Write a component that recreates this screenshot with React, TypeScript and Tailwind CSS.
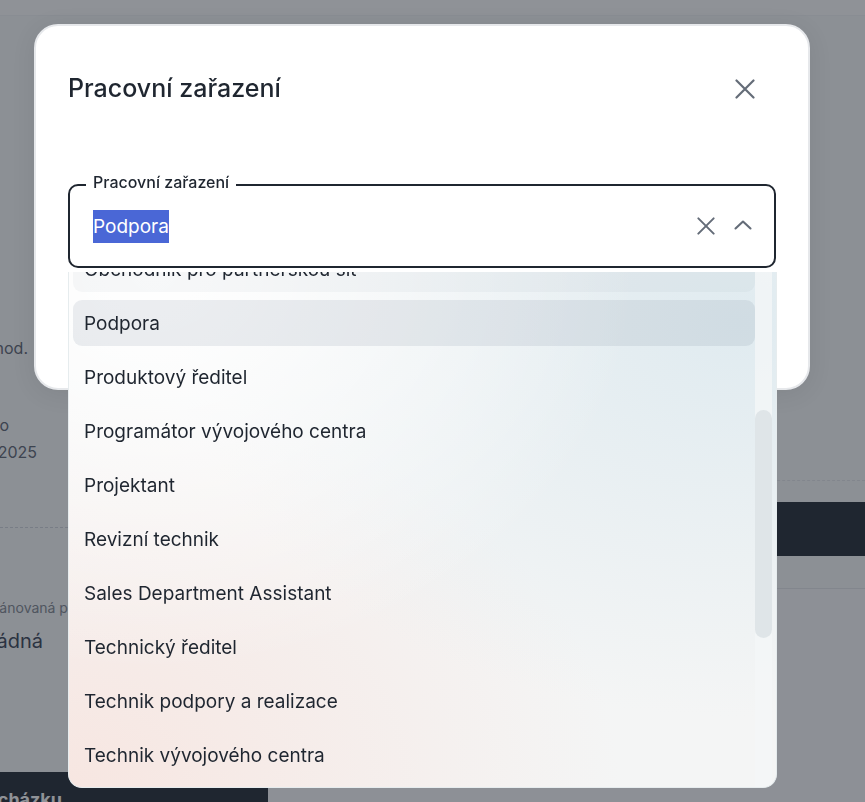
import { useState } from 'react';

const jobTitles = [
  'Obchodník pro partnerskou síť',
  'Podpora',
  'Produktový ředitel',
  'Programátor vývojového centra',
  'Projektant',
  'Revizní technik',
  'Sales Department Assistant',
  'Technický ředitel',
  'Technik podpory a realizace',
  'Technik vývojového centra',
  'Účetní',
  'Vedoucí obchodu',
];

const CloseIcon = ({ size = 20 }: { size?: number }) => (
  <svg width={size} height={size} viewBox="0 0 20 20" fill="none">
    <path
      d="M1.5 1.5L18.5 18.5M18.5 1.5L1.5 18.5"
      stroke="currentColor"
      strokeWidth="2.2"
      strokeLinecap="round"
    />
  </svg>
);

const ChevronUp = () => (
  <svg width="18" height="10" viewBox="0 0 18 10" fill="none">
    <path
      d="M1.5 8.5L9 1.5L16.5 8.5"
      stroke="currentColor"
      strokeWidth="2.1"
      strokeLinecap="round"
      strokeLinejoin="round"
    />
  </svg>
);

// page that sits behind the dialog, mostly covered
const BackgroundPage = () => (
  <div className="min-h-screen bg-[#f9fafb] flex flex-col">
    <div className="h-[16px] bg-white border-b border-gray-100" />
    <div className="flex flex-1">
      <aside className="w-[268px] flex flex-col text-[#5b6270]">
        <div className="mt-[320px] w-[28px] flex justify-end whitespace-nowrap text-[16px] leading-[24px]">
          Pracovní doba dle dohod.
        </div>
        <div className="mt-[53px] w-[9px] flex justify-end whitespace-nowrap text-[16px] leading-[24px]">
          Platné do
        </div>
        <div className="mt-[3px] w-[37px] flex justify-end whitespace-nowrap text-[16px] leading-[24px]">
          31. 12. 2025
        </div>
        <div className="mt-[63px] border-t border-dashed border-gray-300" />
        <div className="mt-[70px] -ml-[31px] whitespace-nowrap text-[14px] leading-[20px] text-[#80868f]">
          Naplánovaná přestávka
        </div>
        <div className="mt-[9px] w-[43px] flex justify-end whitespace-nowrap text-[20px] leading-[28px] text-gray-700">
          Žádná
        </div>
        <div className="mt-[117px] h-[54px] bg-[#1f2630] flex items-center">
          <div className="w-[62px] flex justify-end whitespace-nowrap text-[18px] font-bold text-white">
            Zapsat docházku
          </div>
        </div>
      </aside>
      <main className="flex-1 flex flex-col">
        <div className="mt-[464px] border-t border-dashed border-gray-200" />
        <div className="mt-[21px] ml-[40px] h-[54px] bg-[#1f2630]" />
        <div className="mt-[32px] flex-1 border-t border-gray-200 bg-[#fbfbfc]" />
      </main>
    </div>
  </div>
);

export default function App() {
  const [value] = useState('Podpora');

  return (
    <div className="relative font-['Inter',sans-serif] text-[#1f2630]">
      <BackgroundPage />

      <div className="fixed inset-0 bg-[#1f2630]/50 pt-[24px] pl-[34px]">
        <div className="relative w-[776px] h-[366px] rounded-[24px] bg-white border-2 border-[#e6e8eb] shadow-[0_4px_24px_rgba(0,0,0,0.08)] px-[32px]">
          <div className="mt-[43px] h-[40px] flex items-center justify-between">
            <h2 className="text-[25px] font-medium">Pracovní zařazení</h2>
            <button className="mr-[21px] text-[#646c78]">
              <CloseIcon />
            </button>
          </div>

          <div className="relative mt-[66px]">
            <fieldset className="h-[93px] rounded-[10px] border-2 border-[#1f2630] bg-white pl-[23px] pr-[22px]">
              <legend className="-ml-[7px] px-[7px] text-[16px] leading-[20px] font-medium">
                <span className="relative -top-[3px]">Pracovní zařazení</span>
              </legend>
              <div className="h-[62px] flex items-center">
                <div className="flex-1">
                  <span className="bg-[#4a67d6] text-white text-[19px] leading-[33px] inline-block">
                    {value}
                  </span>
                </div>
                <span className="text-[#646c78]">
                  <CloseIcon size={18} />
                </span>
                <span className="ml-[19px] text-[#646c78] mb-[2px]">
                  <ChevronUp />
                </span>
              </div>
            </fieldset>

            <div className="absolute left-0 top-[calc(100%+4px)] w-[709px] h-[516px] overflow-hidden rounded-b-[14px] border-x border-b border-[#e6ecee] bg-[#f4f5f5] bg-[radial-gradient(ellipse_at_12%_0%,#ffffff_0%,transparent_55%),radial-gradient(ellipse_at_95%_10%,#e0ebf0_0%,transparent_60%),radial-gradient(ellipse_at_0%_100%,#f7e6e1_0%,transparent_55%)] flex">
              <ul className="ml-[4px] w-[682px] -mt-[26px] flex flex-col gap-[8px]">
                {jobTitles.map((title) => (
                  <li
                    key={title}
                    className={`h-[46px] shrink-0 rounded-[9px] pl-[11px] pt-[3px] flex items-center text-[19px] ${
                      title === value
                        ? 'bg-[#64748b]/[0.12]'
                        : title === 'Obchodník pro partnerskou síť'
                          ? 'bg-[#64748b]/[0.05]'
                          : ''
                    }`}
                  >
                    {title}
                  </li>
                ))}
              </ul>
              <div className="w-[17px] bg-[#f4f6f7]/80 flex flex-col">
                <div className="mt-[138px] h-[228px] rounded-full bg-[#dfe5e8]" />
              </div>
            </div>
          </div>
        </div>
      </div>
    </div>
  );
}
